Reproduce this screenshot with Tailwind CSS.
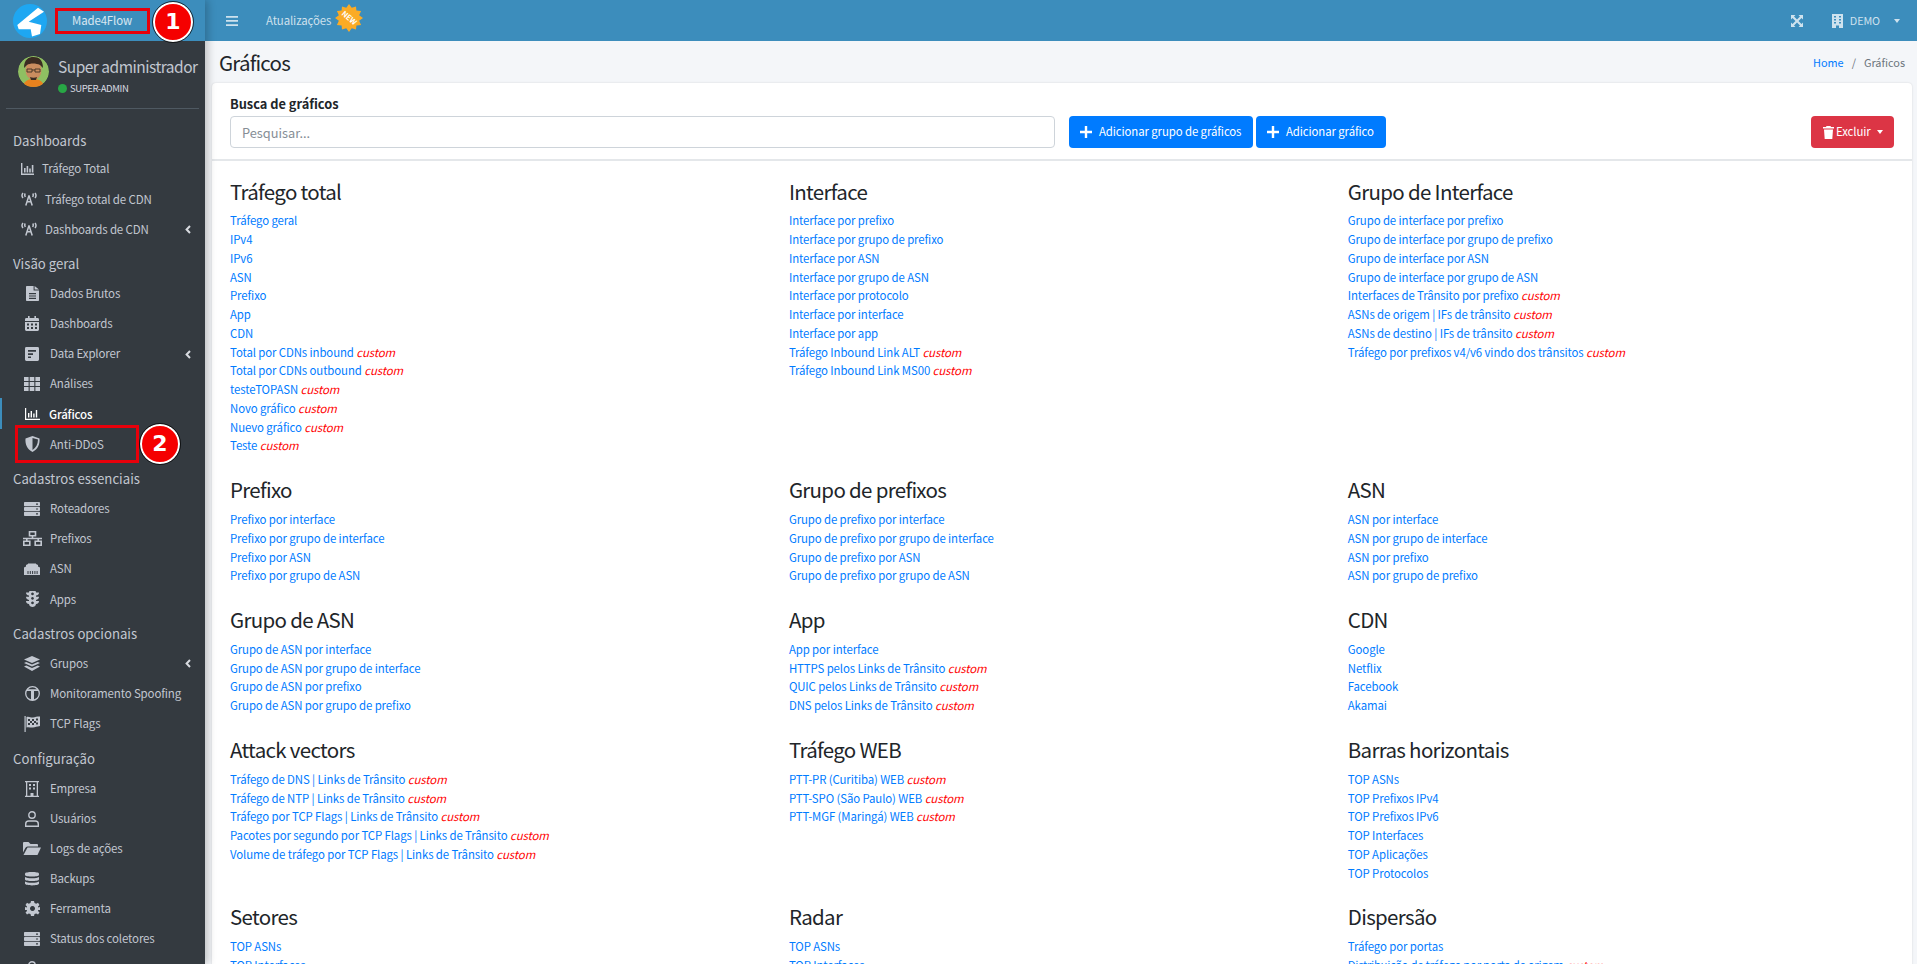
<!DOCTYPE html>
<html lang="pt-BR">
<head>
    <meta charset="UTF-8">
    <title>Gráficos</title>
    <script src="https://cdn.jsdelivr.net/npm/@tailwindcss/browser@4"></script>
</head>
<body class="h-screen overflow-hidden bg-[#f4f6f9] font-['Noto_Sans_CJK_JP','Liberation_Sans',sans-serif] text-[#212529]">
<div class="flex h-screen">

    <!-- sidebar -->
    <aside class="relative z-10 w-[205px] shrink-0 bg-[#343a40] text-[#c2c7d0] shadow-[3px_0_8px_rgba(0,0,0,0.22)]">
        <div class="relative flex h-[41px] items-center bg-[#3c8dbc] pl-[13px]">
            <svg class="h-[34px] w-[34px] shrink-0" viewBox="0 0 34 34">
                <circle cx="17" cy="17" r="17" fill="#1ea7f2"/>
                <path d="M25 3.700 L31 7.700 L15.700 17.700 L28.300 21 L27 30 L19 32.500 L17.700 25.300 L5.700 25.300 L4.300 21 Z" fill="#fff"/>
            </svg>
            <span class="ml-[25px] text-[11.4px] leading-none tracking-[-0.1px] text-white/80">Made4Flow</span>
            <div class="absolute left-[55px] top-[8px] h-[26px] w-[95px] border-[3px] border-[#e8000b]"></div>
            <div class="absolute left-[153px] top-[2px] flex h-[40px] w-[40px] items-center justify-center rounded-full border-2 border-white bg-[#f50000] font-['DejaVu_Sans'] text-[22px] font-bold leading-none text-white outline outline-1 outline-black/70">1</div>
        </div>

        <div class="mx-[6px] flex h-[68px] items-start border-b border-[#4f5962]">
            <svg class="ml-[12px] mt-[15px] h-[31px] w-[31px] shrink-0 rounded-full" viewBox="0 0 31 31">
                <circle cx="15.500" cy="15.500" r="15.500" fill="#8fbf62"/>
                <path d="M5 31 C6 24 11 23 15.500 23 C20 23 25 24 26 31 Z" fill="#e8821e"/>
                <ellipse cx="15.500" cy="14" rx="8" ry="10" fill="#c98d5f"/>
                <path d="M6 12 C6 3 11 1 15.500 1 C21 1 25 4 25 12 L22 9 C18 7 12 7 9 9 Z" fill="#3a2c22"/>
                <path d="M9 13 H14 V16 H9 Z M17 13 H22 V16 H17 Z M14 14 H17" fill="none" stroke="#4a3a2a" stroke-width="1"/>
                <path d="M12 21 C14 22 17 22 19 21 L18 24 H13 Z" fill="#3a2c22"/>
            </svg>
            <div class="ml-[9px] mt-[13px]">
                <p class="whitespace-nowrap text-[15.5px] leading-[24px] tracking-[-0.5px]">Super administrador</p>
                <p class="mt-[3px] flex items-center text-[9.500px] leading-[14px] tracking-[-0.4px] text-[#d8dbe0]"><span class="mr-[3px] h-[9px] w-[9px] rounded-full bg-[#28a745]"></span>SUPER-ADMIN</p>
            </div>
        </div>

        <nav class="pt-[15.5px] text-[11.5px] tracking-[-0.15px]">
            <h5 class="flex h-[29.5px] translate-y-[1px] items-center pl-[13px] text-[13.2px] leading-none tracking-normal">Dashboards</h5>
            <a class="flex h-[30.1px] items-center pl-[21px]">
                <svg class="mr-[8px] h-[12px] w-[13px] shrink-0" viewBox="0 0 13 12" fill="currentColor"><path d="M0 0h1.400v10.600H13V12H0z"/><path d="M3 5h1.600v4.600H3zM5.600 3h1.600v6.600H5.600zM8.200 5.500h1.600v4.100H8.200zM10.800 2h1.600v7.600h-1.600z"/></svg>
                Tráfego Total</a>
            <a class="flex h-[30.1px] items-center pl-[21px]">
                <svg class="mr-[8px] h-[14px] w-[16px] shrink-0" viewBox="0 0 16 14" fill="none" stroke="currentColor" stroke-width="1.500"><path d="M8 3.500 L4.800 13.500 M8 3.500 L11.200 13.500 M6 9.800H10"/><path d="M2 1 C0.800 2.500 0.800 4.500 2 6 M14 1 C15.200 2.500 15.200 4.500 14 6 M4.300 1.500 C3.500 2.500 3.500 3.500 4.300 5 M11.700 1.500 C12.500 2.500 12.500 3.500 11.700 5"/></svg>
                Tráfego total de CDN</a>
            <a class="relative flex h-[30.1px] items-center pl-[21px]">
                <svg class="mr-[8px] h-[14px] w-[16px] shrink-0" viewBox="0 0 16 14" fill="none" stroke="currentColor" stroke-width="1.500"><path d="M8 3.500 L4.800 13.500 M8 3.500 L11.200 13.500 M6 9.800H10"/><path d="M2 1 C0.800 2.500 0.800 4.500 2 6 M14 1 C15.200 2.500 15.200 4.500 14 6 M4.300 1.500 C3.500 2.500 3.500 3.500 4.300 5 M11.700 1.500 C12.500 2.500 12.500 3.500 11.700 5"/></svg>
                Dashboards de CDN
                <svg class="absolute left-[185px] top-[10.5px] h-[9px] w-[6px]" viewBox="0 0 6 9" fill="none" stroke="#d8dbe0" stroke-width="2"><path d="M5 1 L1.600 4.500 L5 8"/></svg></a>

            <h5 class="mt-[5px] flex h-[29.5px] items-center pl-[13px] text-[13.2px] leading-none tracking-normal">Visão geral</h5>
            <a class="flex h-[30.1px] items-center pl-[21px]">
                <span class="mr-[7px] flex w-[22px] justify-center"><svg class="h-[15px] w-[13px]" viewBox="0 0 13 15" fill="currentColor"><path d="M0 .800Q0 0 .800 0H7.600V4.600H13V14.200Q13 15 12.200 15H.800Q0 15 0 14.200zM3 7v1.200h7V7zM3 9.400v1.200h7V9.400zM3 11.800V13h7v-1.200zM8.600 0 13 3.600H8.600z"/></svg></span>
                Dados Brutos</a>
            <a class="flex h-[30.1px] items-center pl-[21px]">
                <span class="mr-[7px] flex w-[22px] justify-center"><svg class="h-[15px] w-[14px]" viewBox="0 0 14 15" fill="currentColor"><path d="M3 0h1.600v2H9.400V0H11v2h1.600Q14 2 14 3.400V5H0V3.400Q0 2 1.400 2H3zM0 6H14V13.600Q14 15 12.600 15H1.400Q0 15 0 13.600zM2 7.600v2h2v-2zM6 7.600v2h2v-2zM10 7.600v2h2v-2zM2 11v2h2v-2zM6 11v2h2v-2zM10 11v2h2v-2z" fill-rule="evenodd"/></svg></span>
                Dashboards</a>
            <a class="relative flex h-[30.1px] items-center pl-[21px]">
                <span class="mr-[7px] flex w-[22px] justify-center"><svg class="h-[14px] w-[14px]" viewBox="0 0 14 14" fill="currentColor"><path fill-rule="evenodd" d="M1.400 0H12.600Q14 0 14 1.400V12.600Q14 14 12.600 14H1.400Q0 14 0 12.600V1.400Q0 0 1.400 0zM3 3v1.700h8V3zM3 6.200v1.700h5V6.200zM3 9.400v1.700h3V9.400z"/></svg></span>
                Data Explorer
                <svg class="absolute left-[185px] top-[11px] h-[9px] w-[6px]" viewBox="0 0 6 9" fill="none" stroke="#d8dbe0" stroke-width="2"><path d="M5 1 L1.600 4.500 L5 8"/></svg></a>
            <a class="flex h-[30.1px] items-center pl-[21px]">
                <span class="mr-[7px] flex w-[22px] justify-center"><svg class="h-[14px] w-[16px]" viewBox="0 0 16 14" fill="currentColor"><path d="M0 0h4.600v4H0zM5.700 0h4.600v4H5.700zM11.400 0H16v4h-4.600zM0 5h4.600v4H0zM5.700 5h4.600v4H5.700zM11.400 5H16v4h-4.600zM0 10h4.600v4H0zM5.700 10h4.600v4H5.700zM11.400 10H16v4h-4.600z"/></svg></span>
                Análises</a>
            <a class="relative flex h-[30.1px] items-center pl-[21px] font-medium text-white">
                <span class="absolute left-0 top-[-1px] h-[31px] w-[2px] bg-[#3c8dbc]"></span>
                <span class="mr-[6px] flex w-[22px] justify-center"><svg class="h-[12px] w-[15px]" viewBox="0 0 15 12" fill="currentColor"><path d="M0 0h1.200v10.800H15V12H0z"/><path d="M3 5h1.400v4.600H3zM5.600 3h1.400v6.600H5.600zM8.200 5.500h1.400v4.100H8.200zM10.800 2h1.400v7.600h-1.400z"/></svg></span>
                Gráficos</a>
            <a class="relative flex h-[30.1px] items-center pl-[21px]">
                <span class="mr-[7px] flex w-[22px] justify-center"><svg class="h-[16px] w-[15px]" viewBox="0 0 15 16" fill="currentColor"><path fill-rule="evenodd" d="M7.500 0 L14.500 2.600 C15 8 13 13.500 7.500 16 C2 13.500 0 8 .500 2.600zM7.500 2 V14 C11 12 12.800 8.500 13 3.600z"/></svg></span>
                Anti-DDoS
                <div class="absolute left-[15px] top-[-4px] h-[38px] w-[124px] border-[3px] border-[#e8000b]"></div>
                <div class="absolute left-[140px] top-[-5px] flex h-[40px] w-[40px] items-center justify-center rounded-full border-2 border-white bg-[#f50000] font-['DejaVu_Sans'] text-[22px] font-bold leading-none tracking-normal text-white outline outline-1 outline-black/70">2</div></a>

            <h5 class="mt-[5px] flex h-[29.5px] items-center pl-[13px] text-[13.2px] leading-none tracking-normal">Cadastros essenciais</h5>
            <a class="flex h-[30.1px] items-center pl-[21px]">
                <span class="mr-[7px] flex w-[22px] justify-center"><svg class="h-[14px] w-[16px]" viewBox="0 0 16 14" fill="currentColor"><path fill-rule="evenodd" d="M0 .800Q0 0 .800 0H15.200Q16 0 16 .800V3.600Q16 4.200 15.200 4.200H.800Q0 4.200 0 3.600zM0 5.700Q0 4.900.800 4.900H15.200Q16 4.900 16 5.700V8.300Q16 9.100 15.200 9.100H.800Q0 9.100 0 8.300zM0 10.600Q0 9.800.800 9.800H15.200Q16 9.800 16 10.600V13.200Q16 14 15.200 14H.800Q0 14 0 13.200zM12 1.500v1.200h2V1.500zM12 6.400v1.200h2V6.400zM12 11.300v1.200h2v-1.200z"/></svg></span>
                Roteadores</a>
            <a class="flex h-[30.1px] items-center pl-[21px]">
                <span class="mr-[7px] flex w-[22px] justify-center"><svg class="h-[15px] w-[19px]" viewBox="0 0 19 15" fill="none" stroke="currentColor" stroke-width="1.600"><path d="M6.500.800h6v4h-6zM.800 10.200h6v4h-6zM12.200 10.200h6v4h-6zM9.500 5v2.500M0 7.500H19M3.800 7.500V10M15.200 7.500V10"/></svg></span>
                Prefixos</a>
            <a class="flex h-[30.1px] items-center pl-[21px]">
                <span class="mr-[7px] flex w-[22px] justify-center"><svg class="h-[12px] w-[16px]" viewBox="0 0 16 12" fill="currentColor"><path fill-rule="evenodd" d="M0 12V4.500L2 3.500V2L4 1V.500H12V1L14 2V3.500L16 4.500V12zM3.500 8v3h1V8zM5.800 8v3h1V8zM8.100 8v3h1V8zM10.400 8v3h1V8zM12.600 8v3h1V8z"/></svg></span>
                ASN</a>
            <a class="flex h-[30.1px] items-center pl-[21px]">
                <span class="mr-[7px] flex w-[22px] justify-center"><svg class="h-[16px] w-[13px]" viewBox="0 0 13 16" fill="currentColor"><path fill-rule="evenodd" d="M3 1Q3 0 4 0H9Q10 0 10 1V1.500H13C13 3.200 12 4.300 10 4.600V5.800H13C13 7.500 12 8.600 10 8.900V10H13C13 11.700 12 12.800 10 13.100 10 15 8 16 6.500 16S3 15 3 13.100C1 12.800 0 11.700 0 10H3V8.900C1 8.600 0 7.500 0 5.800H3V4.600C1 4.300 0 3.200 0 1.500H3zM6.500 1.500a1.400 1.400 0 1 0 .01 0zM6.500 6a1.400 1.400 0 1 0 .01 0zM6.500 10.500a1.400 1.400 0 1 0 .01 0z"/></svg></span>
                Apps</a>

            <h5 class="mt-[5px] flex h-[29.5px] items-center pl-[13px] text-[13.2px] leading-none tracking-normal">Cadastros opcionais</h5>
            <a class="relative flex h-[30.1px] items-center pl-[21px]">
                <span class="mr-[7px] flex w-[22px] justify-center"><svg class="h-[15px] w-[16px]" viewBox="0 0 16 15" fill="currentColor"><path d="M8 0 16 3.500 8 7 0 3.500z"/><path d="M2.200 6 8 8.600 13.800 6 16 7 8 10.500 0 7z"/><path d="M2.200 9.500 8 12.100 13.800 9.500 16 10.500 8 15 0 10.500z"/></svg></span>
                Grupos
                <svg class="absolute left-[185px] top-[10.5px] h-[9px] w-[6px]" viewBox="0 0 6 9" fill="none" stroke="#d8dbe0" stroke-width="2"><path d="M5 1 L1.600 4.500 L5 8"/></svg></a>
            <a class="flex h-[30.1px] items-center pl-[21px]">
                <span class="mr-[7px] flex w-[22px] justify-center"><svg class="h-[15px] w-[15px]" viewBox="0 0 15 15"><circle cx="7.500" cy="7.500" r="6.800" fill="none" stroke="currentColor" stroke-width="1.300"/><path d="M2 3.200H13V5H9V14H6V5H2z" fill="currentColor"/></svg></span>
                Monitoramento Spoofing</a>
            <a class="flex h-[30.1px] items-center pl-[21px]">
                <span class="mr-[7px] flex w-[22px] justify-center"><svg class="h-[16px] w-[16px]" viewBox="0 0 16 16" fill="currentColor"><path d="M.500 0h1.200v16H.500z"/><path fill-rule="evenodd" d="M2.500 1C5 0 7 2 9 1.500 11 1 13 .500 16 .500V10C13 10.500 11 11 9 11.500 7 12 5 10.500 2.500 11.500zM4 3v2h2V3zM8 3v2h2V3zM12 2.600v2h2v-2zM6 5v2h2V5zM10 5v2h2V5zM4 7v2h2V7zM8 7v2h2V7zM12 6.600v2h2v-2z"/></svg></span>
                TCP Flags</a>

            <h5 class="mt-[5px] flex h-[29.5px] items-center pl-[13px] text-[13.2px] leading-none tracking-normal">Configuração</h5>
            <a class="flex h-[30.1px] items-center pl-[21px]">
                <span class="mr-[7px] flex w-[22px] justify-center"><svg class="h-[16px] w-[14px]" viewBox="0 0 14 16" fill="currentColor"><path fill-rule="evenodd" d="M0 0H14V1.200H13V14.800H14V16H0V14.800H1V1.200H0zM2.300 1.200V14.800H5.500V12H8.500V14.800H11.700V1.200zM4 3v2h2V3zM8 3v2h2V3zM4 6.500v2h2v-2zM8 6.500v2h2v-2z"/></svg></span>
                Empresa</a>
            <a class="flex h-[30.1px] items-center pl-[21px]">
                <span class="mr-[7px] flex w-[22px] justify-center"><svg class="h-[16px] w-[14px]" viewBox="0 0 14 16" fill="none" stroke="currentColor" stroke-width="1.400"><circle cx="7" cy="4" r="3.200"/><path d="M.700 15.300V13Q.700 10 3.700 10H10.300Q13.300 10 13.300 13V15.300z"/></svg></span>
                Usuários</a>
            <a class="flex h-[30.1px] items-center pl-[21px]">
                <span class="mr-[7px] flex w-[22px] justify-center"><svg class="h-[13px] w-[18px]" viewBox="0 0 18 13" fill="currentColor"><path d="M0 1Q0 0 1 0H5.500L7.500 2H14Q15 2 15 3V4.500H4.500Q3 4.500 2.300 6L0 10.500z"/><path d="M4.500 5.500H18L14.500 13H.500z"/></svg></span>
                Logs de ações</a>
            <a class="flex h-[30.1px] items-center pl-[21px]">
                <span class="mr-[7px] flex w-[22px] justify-center"><svg class="h-[15px] w-[14px]" viewBox="0 0 14 15" fill="currentColor"><path d="M0 2.500C0 .500 14 .500 14 2.500V4C14 6 0 6 0 4z"/><path d="M0 6C2 7.800 12 7.800 14 6V8.500C14 10.500 0 10.500 0 8.500z"/><path d="M0 10.500C2 12.300 12 12.300 14 10.500V12.500C14 15 0 15 0 12.500z"/></svg></span>
                Backups</a>
            <a class="flex h-[30.1px] items-center pl-[21px]">
                <span class="mr-[7px] flex w-[22px] justify-center"><svg class="h-[15px] w-[15px]" viewBox="0 0 15 15" fill="currentColor"><path fill-rule="evenodd" d="M6 0H9L9.500 2 11.200 2.800 13 1.700 14.500 4 13 5.500 13.200 6.500 15 6V9L13.200 9 13 10 14.500 11.500 13 13.500 11.200 12.500 9.500 13 9 15H6L5.500 13 3.800 12.500 2 13.500 .500 11.500 2 10 1.800 9 0 9V6L1.800 6.500 2 5.500 .500 4 2 1.700 3.800 2.800 5.500 2zM7.500 5a2.500 2.500 0 1 0 .01 0z"/></svg></span>
                Ferramenta</a>
            <a class="flex h-[30.1px] items-center pl-[21px]">
                <span class="mr-[7px] flex w-[22px] justify-center"><svg class="h-[14px] w-[16px]" viewBox="0 0 16 14" fill="currentColor"><path fill-rule="evenodd" d="M0 .800Q0 0 .800 0H15.200Q16 0 16 .800V3.600Q16 4.200 15.200 4.200H.800Q0 4.200 0 3.600zM0 5.700Q0 4.900.800 4.900H15.200Q16 4.900 16 5.700V8.300Q16 9.100 15.200 9.100H.800Q0 9.100 0 8.300zM0 10.600Q0 9.800.800 9.800H15.200Q16 9.800 16 10.600V13.200Q16 14 15.200 14H.800Q0 14 0 13.200zM12 1.500v1.200h2V1.500zM12 6.400v1.200h2V6.400zM12 11.300v1.200h2v-1.200z"/></svg></span>
                Status dos coletores</a>
            <a class="flex h-[30.1px] items-center pl-[21px]">
                <span class="mr-[7px] flex w-[22px] justify-center"><svg class="h-[16px] w-[14px]" viewBox="0 0 14 16" fill="none" stroke="currentColor" stroke-width="1.400"><circle cx="7" cy="4" r="3.200"/><path d="M.700 15.300V13Q.700 10 3.700 10H10.300Q13.300 10 13.300 13V15.300z"/></svg></span>
            </a>
        </nav>
    </aside>

    <!-- main -->
    <div class="min-w-0 flex-1">
        <header class="flex h-[41px] items-center bg-[#3c8dbc] text-[11.4px] tracking-[-0.1px] text-white/75">
            <svg class="ml-[21px] h-[10px] w-[12px]" viewBox="0 0 12 10" fill="currentColor"><path d="M0 0h12v1.700H0zM0 4.100h12v1.700H0zM0 8.300h12V10H0z"/></svg>
            <span class="ml-[28px] leading-none">Atualizações</span>
            <svg class="mb-[5px] ml-[4px] h-[28px] w-[28px]" viewBox="0 0 28 28">
                <polygon fill="#fbab25" points="14,0 16.720,3.860 21,2.400 21.420,6.580 26.100,7 24.140,11.280 28,14 24.140,16.720 26.100,21 21.420,21.420 21,25.600 16.720,24.140 14,28 11.280,24.140 7,25.600 6.580,21.420 1.900,21 3.860,16.720 0,14 3.860,11.280 1.900,7 6.580,6.580 7,2.400 11.280,3.860"/>
                <text x="14" y="16.500" text-anchor="middle" font-size="7.500" font-weight="700" fill="#fff" transform="rotate(40 14 14)">NEW</text>
            </svg>
            <div class="ml-auto flex items-center">
                <svg class="h-[12px] w-[12px]" viewBox="0 0 12 12" fill="currentColor"><path d="M0 0h4.500L3 1.500 6 4.500 9 1.500 7.500 0H12v4.500L10.500 3 7.500 6l3 3L12 7.500V12H7.500L9 10.500 6 7.500 3 10.500 4.500 12H0V7.500L1.500 9l3-3-3-3L0 4.500z"/></svg>
                <svg class="ml-[29px] h-[14px] w-[11px]" viewBox="0 0 11 14" fill="currentColor"><path fill-rule="evenodd" d="M0 0H11V14H7V11.500H4V14H0zM2 2v1.500h2V2zM7 2v1.500h2V2zM2 5v1.500h2V5zM7 5v1.500h2V5zM2 8v1.500h2V8zM7 8v1.500h2V8z"/></svg>
                <span class="ml-[7px] text-[10.8px] leading-none">DEMO</span>
                <span class="ml-[14px] mr-[17px] h-0 w-0 border-x-[3.500px] border-t-[4px] border-x-transparent border-t-white/75"></span>
            </div>
        </header>

        <div class="flex h-[42px] items-center justify-between pl-[14px] pr-[12px]">
            <h1 class="text-[20.5px] leading-none tracking-[-0.8px]">Gráficos</h1>
            <p class="text-[10.9px] leading-none text-[#6c757d]"><a class="text-[#007bff]">Home</a><span class="mx-[8px]">/</span>Gráficos</p>
        </div>

        <div class="ml-[7px] mr-[5px] rounded-[4px] bg-white shadow-[0_0_2px_rgba(0,0,0,0.15)]">
            <div class="border-b-2 border-[#e4e7ea] px-[18px] pb-[11px] pt-[8px]">
                <p class="text-[12.8px] font-bold leading-[25px]">Busca de gráficos</p>
                <div class="flex items-center">
                    <input type="text" placeholder="Pesquisar..." class="h-[32px] w-[825px] rounded-[4px] border border-[#ced4da] px-[11px] text-[12.8px] placeholder:text-[#868e96]">
                    <button class="ml-[14px] flex h-[32px] w-[184px] items-center whitespace-nowrap rounded-[4px] bg-[#007bff] pl-[11px] text-[11.4px] tracking-[-0.1px] text-white">
                        <svg class="mr-[7px] h-[12px] w-[12px] shrink-0" viewBox="0 0 12 12" fill="currentColor"><path d="M4.800 0h2.400v4.800H12v2.400H7.200V12H4.800V7.200H0V4.800h4.800z"/></svg>
                        Adicionar grupo de gráficos</button>
                    <button class="ml-[3px] flex h-[32px] w-[130px] items-center whitespace-nowrap rounded-[4px] bg-[#007bff] pl-[11px] text-[11.4px] tracking-[-0.1px] text-white">
                        <svg class="mr-[7px] h-[12px] w-[12px] shrink-0" viewBox="0 0 12 12" fill="currentColor"><path d="M4.800 0h2.400v4.800H12v2.400H7.200V12H4.800V7.200H0V4.800h4.800z"/></svg>
                        Adicionar gráfico</button>
                    <button class="ml-auto flex h-[32px] w-[83px] items-center whitespace-nowrap rounded-[4px] bg-[#dc3545] pl-[12px] text-[11.4px] tracking-[-0.1px] text-white">
                        <svg class="mr-[2px] h-[13px] w-[11px] shrink-0" viewBox="0 0 11 13" fill="currentColor"><path d="M3.500 0h4l.5 1H11v1.500H0V1h3zM1 3.500h9l-.7 9.500H1.700z"/></svg>
                        Excluir
                        <span class="ml-[6px] h-0 w-0 border-x-[3.500px] border-t-[4px] border-x-transparent border-t-white"></span></button>
                </div>
            </div>

            <div class="grid grid-cols-[repeat(3,558.9px)] pl-[18px] pt-[15.5px] text-[11.4px] leading-[18.75px] tracking-[-0.1px] text-[#007bff] [&_h3]:mb-[5.5px] [&_h3]:text-[20.5px] [&_h3]:leading-[29.4px] [&_h3]:tracking-[-0.68px] [&_h3]:text-[#212529] [&_i]:text-[#ff0000] [&_section]:mb-[20px]">
                <section>
                    <h3>Tráfego total</h3>
                    <p>Tráfego geral</p><p>IPv4</p><p>IPv6</p><p>ASN</p><p>Prefixo</p><p>App</p><p>CDN</p>
                    <p>Total por CDNs inbound <i>custom</i></p>
                    <p>Total por CDNs outbound <i>custom</i></p>
                    <p>testeTOPASN <i>custom</i></p>
                    <p>Novo gráfico <i>custom</i></p>
                    <p>Nuevo gráfico <i>custom</i></p>
                    <p>Teste <i>custom</i></p>
                </section>
                <section>
                    <h3>Interface</h3>
                    <p>Interface por prefixo</p><p>Interface por grupo de prefixo</p><p>Interface por ASN</p><p>Interface por grupo de ASN</p><p>Interface por protocolo</p><p>Interface por interface</p><p>Interface por app</p>
                    <p>Tráfego Inbound Link ALT <i>custom</i></p>
                    <p>Tráfego Inbound Link MS00 <i>custom</i></p>
                </section>
                <section>
                    <h3>Grupo de Interface</h3>
                    <p>Grupo de interface por prefixo</p><p>Grupo de interface por grupo de prefixo</p><p>Grupo de interface por ASN</p><p>Grupo de interface por grupo de ASN</p>
                    <p>Interfaces de Trânsito por prefixo <i>custom</i></p>
                    <p>ASNs de origem | IFs de trânsito <i>custom</i></p>
                    <p>ASNs de destino | IFs de trânsito <i>custom</i></p>
                    <p>Tráfego por prefixos v4/v6 vindo dos trânsitos <i>custom</i></p>
                </section>

                <section>
                    <h3>Prefixo</h3>
                    <p>Prefixo por interface</p><p>Prefixo por grupo de interface</p><p>Prefixo por ASN</p><p>Prefixo por grupo de ASN</p>
                </section>
                <section>
                    <h3>Grupo de prefixos</h3>
                    <p>Grupo de prefixo por interface</p><p>Grupo de prefixo por grupo de interface</p><p>Grupo de prefixo por ASN</p><p>Grupo de prefixo por grupo de ASN</p>
                </section>
                <section>
                    <h3>ASN</h3>
                    <p>ASN por interface</p><p>ASN por grupo de interface</p><p>ASN por prefixo</p><p>ASN por grupo de prefixo</p>
                </section>

                <section>
                    <h3>Grupo de ASN</h3>
                    <p>Grupo de ASN por interface</p><p>Grupo de ASN por grupo de interface</p><p>Grupo de ASN por prefixo</p><p>Grupo de ASN por grupo de prefixo</p>
                </section>
                <section>
                    <h3>App</h3>
                    <p>App por interface</p>
                    <p>HTTPS pelos Links de Trânsito <i>custom</i></p>
                    <p>QUIC pelos Links de Trânsito <i>custom</i></p>
                    <p>DNS pelos Links de Trânsito <i>custom</i></p>
                </section>
                <section>
                    <h3>CDN</h3>
                    <p>Google</p><p>Netflix</p><p>Facebook</p><p>Akamai</p>
                </section>

                <section>
                    <h3>Attack vectors</h3>
                    <p>Tráfego de DNS | Links de Trânsito <i>custom</i></p>
                    <p>Tráfego de NTP | Links de Trânsito <i>custom</i></p>
                    <p>Tráfego por TCP Flags | Links de Trânsito <i>custom</i></p>
                    <p>Pacotes por segundo por TCP Flags | Links de Trânsito <i>custom</i></p>
                    <p>Volume de tráfego por TCP Flags | Links de Trânsito <i>custom</i></p>
                </section>
                <section>
                    <h3>Tráfego WEB</h3>
                    <p>PTT-PR (Curitiba) WEB <i>custom</i></p>
                    <p>PTT-SPO (São Paulo) WEB <i>custom</i></p>
                    <p>PTT-MGF (Maringá) WEB <i>custom</i></p>
                </section>
                <section>
                    <h3>Barras horizontais</h3>
                    <p>TOP ASNs</p><p>TOP Prefixos IPv4</p><p>TOP Prefixos IPv6</p><p>TOP Interfaces</p><p>TOP Aplicações</p><p>TOP Protocolos</p>
                </section>

                <section>
                    <h3>Setores</h3>
                    <p>TOP ASNs</p><p>TOP Interfaces</p>
                </section>
                <section>
                    <h3>Radar</h3>
                    <p>TOP ASNs</p><p>TOP Interfaces</p>
                </section>
                <section>
                    <h3>Dispersão</h3>
                    <p>Tráfego por portas</p>
                    <p class="tracking-[-0.3px]">Distribuição de tráfego por porta de origem <i>custom</i></p>
                </section>
            </div>
        </div>
    </div>
</div>
</body>
</html>
